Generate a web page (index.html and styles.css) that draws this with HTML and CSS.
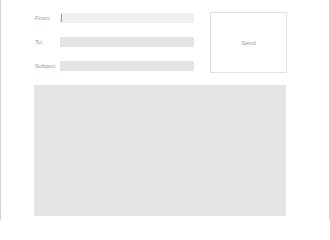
FILE: index.html
```html
<!DOCTYPE html>
<html>
<head>
<meta charset="utf-8">
<link rel="stylesheet" href="styles.css">
</head>
<body>
<div class="page">
  <div class="top">
    <div class="fields">
      <div class="row"><span class="label">From:</span><span class="input focus"><span class="caret"></span></span></div>
      <div class="row"><span class="label">To:</span><span class="input"></span></div>
      <div class="row"><span class="label">Subject:</span><span class="input"></span></div>
    </div>
    <div class="send">Send</div>
  </div>
  <div class="body"></div>
</div>
</body>
</html>
```
FILE: styles.css
```css
html, body { margin: 0; padding: 0; background: #fff; }
.page {
  width: 330px;
  height: 220px;
  box-sizing: border-box;
  border-left: 1px solid #d4d4ce;
  border-right: 1px solid #d4d4ce;
  padding: 12px 0 0 33px;
  font-family: "Liberation Sans", Arial, sans-serif;
}
.top { display: flex; align-items: flex-start; gap: 16px; }
.fields { display: flex; flex-direction: column; gap: 14px; padding-top: 1px; }
.row { display: flex; align-items: center; height: 10px; }
.label { width: 25px; padding-left: 1px; font-size: 6px; color: #9a9a9a; line-height: 10px; }
.input { width: 134px; height: 10px; background: #e4e4e4; display: flex; align-items: center; }
.input.focus { background: #f0f0f0; }
.caret { width: 1px; height: 8px; background: #a0a0a0; margin-left: 1px; }
.send {
  width: 75px; height: 59px;
  border: 1px solid #e0e0e0;
  display: flex; align-items: center; justify-content: center;
  font-size: 6px; color: #9a9a9a;
}
.body { margin-top: 12px; width: 252px; height: 131px; background: #e4e4e4; }
```
